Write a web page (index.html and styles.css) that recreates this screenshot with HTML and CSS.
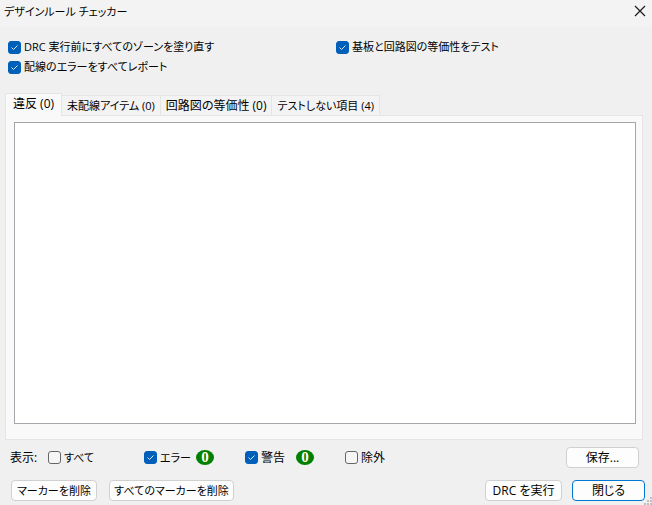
FILE: index.html
```html
<!DOCTYPE html>
<html lang="ja">
<head>
<meta charset="utf-8">
<title>デザインルール チェッカー</title>
<link rel="stylesheet" href="styles.css">
</head>
<body>
<div class="dialog">
  <header class="titlebar">
    <h1 class="title">デザインルール チェッカー</h1>
    <button class="close" type="button" aria-label="閉じる">
      <svg width="12" height="12" viewBox="0 0 12 12"><path d="M1 1L11 11M11 1L1 11" stroke="#1a1a1a" stroke-width="1.2" fill="none"/></svg>
    </button>
  </header>
  <main class="content">
    <section class="options">
      <label class="check compact"><input type="checkbox" checked><span>DRC 実行前にすべてのゾーンを塗り直す</span></label>
      <label class="check compact"><input type="checkbox" checked><span>基板と回路図の等価性をテスト</span></label>
      <label class="check compact"><input type="checkbox" checked><span>配線のエラーをすべてレポート</span></label>
    </section>
    <section class="notebook">
      <div class="tabs" role="tablist">
        <button class="tab active" type="button" role="tab" aria-selected="true">違反 (0)</button>
        <button class="tab compact" type="button" role="tab">未配線アイテム (0)</button>
        <button class="tab" type="button" role="tab">回路図の等価性 (0)</button>
        <button class="tab compact" type="button" role="tab">テストしない項目 (4)</button>
      </div>
      <div class="panel" role="tabpanel"><div class="list"></div></div>
    </section>
    <section class="filters">
      <span>表示:</span>
      <label class="check compact"><input type="checkbox"><span>すべて</span></label>
      <div class="filter"><label class="check compact"><input type="checkbox" checked><span>エラー</span></label><span class="badge">0</span></div>
      <div class="filter"><label class="check"><input type="checkbox" checked><span>警告</span></label><span class="badge">0</span></div>
      <label class="check"><input type="checkbox"><span>除外</span></label>
      <button class="button small" type="button">保存...</button>
    </section>
    <footer class="actions">
      <button class="button medium compact" type="button">マーカーを削除</button>
      <button class="button large compact" type="button">すべてのマーカーを削除</button>
      <button class="button run" type="button">DRC を実行</button>
      <button class="button small default" type="button">閉じる</button>
    </footer>
  </main>
  <svg class="grip" width="8" height="8" viewBox="0 0 8 8" fill="#bfbfbf"><path d="M6 0h2v2h-2zM3 3h2v2h-2zM6 3h2v2h-2zM0 6h2v2h-2zM3 6h2v2h-2zM6 6h2v2h-2z"/></svg>
</div>
</body>
</html>
```
FILE: styles.css
```css
* {
  box-sizing: border-box;
}

body {
  margin: 0;
  background: #f0f0f0;
  color: #000;
  font: 12px/16px "Open Sans", "Noto Sans CJK JP", sans-serif;
  font-feature-settings: "palt";
}

button {
  font: inherit;
  font-feature-settings: inherit;
  color: inherit;
  white-space: nowrap;
}

.compact {
  font-size: 11px;
}

.dialog {
  position: relative;
  display: flex;
  flex-direction: column;
  min-height: 100vh;
}

.titlebar {
  display: flex;
  justify-content: space-between;
  height: 27px;
  padding: 4px 6px 0 4px;
  background: #f3f3f3;
}

.title {
  margin: 0;
  font-size: 11px;
  font-weight: 400;
}

.close {
  width: 12px;
  height: 14px;
  padding: 0;
  border: 0;
  background: none;
}

.close svg {
  display: block;
}

.content {
  flex: 1;
  display: flex;
  flex-direction: column;
}

.options {
  display: grid;
  grid-template-columns: 1fr 1fr;
  gap: 4px 20px;
  padding: 12px 8px 18px;
}

.check {
  display: flex;
  align-items: center;
  gap: 3px;
  white-space: nowrap;
}

.check input {
  appearance: none;
  flex: none;
  width: 13px;
  height: 13px;
  margin: 0;
  border: 1px solid #666;
  border-radius: 3px;
  background: #f6f6f6;
}

.check input:checked {
  border-color: #005fb8;
  background: #005fb8 url("data:image/svg+xml,%3Csvg xmlns='http://www.w3.org/2000/svg' viewBox='0 0 11 11'%3E%3Cpath d='M2.5 5.5L4.5 7.5L8.5 3.5' fill='none' stroke='%23d8e8f6' stroke-width='1'/%3E%3C/svg%3E") center / 11px 11px no-repeat;
}

.notebook {
  flex: 1;
  display: flex;
  flex-direction: column;
  padding: 0 9px 0 5px;
}

.tabs {
  display: flex;
  align-items: flex-end;
}

.tab {
  height: 20px;
  padding: 0 5px;
  border: 1px solid #e5e5e5;
  border-width: 1px 1px 0 0;
  background: #f3f3f3;
}

.tab.active {
  z-index: 1;
  height: 23px;
  margin-bottom: -1px;
  padding: 0 7px 2px;
  border-width: 1px 1px 0;
  background: #f9f9f9;
}

.panel {
  flex: 1;
  display: flex;
  padding: 6px 6px 15px 8px;
  border: 1px solid #e5e5e5;
  background: #f9f9f9;
}

.list {
  flex: 1;
  border: 1px solid #a5a6ab;
  background: #fff;
}

.filters {
  display: grid;
  grid-template-columns: 38px 96px 101px 100px 1fr auto;
  align-items: center;
  padding: 7px 13px 0 10px;
}

.filter {
  display: flex;
  align-items: center;
  justify-content: space-between;
  padding-right: 31px;
}

.badge {
  width: 18px;
  height: 15px;
  border-radius: 50%;
  background: #008000;
  color: #fff;
  font: bold 15px/15px "Liberation Serif", serif;
  text-align: center;
}

.actions {
  display: flex;
  gap: 12px;
  padding: 12px 7px 4px 11px;
}

.button {
  height: 21px;
  padding: 0 4px;
  border: 1px solid #d0d0d0;
  border-radius: 4px;
  background: #fdfdfd;
  line-height: 19px;
}

.small {
  min-width: 73px;
}

.medium {
  min-width: 86px;
}

.large {
  min-width: 125px;
}

.run {
  min-width: 77px;
  margin-left: auto;
}

.default {
  border-color: #0078d4;
}
.run + .default {
  margin-left: -2px;
}

.grip {
  position: absolute;
  right: 0;
  bottom: 0;
}
```
